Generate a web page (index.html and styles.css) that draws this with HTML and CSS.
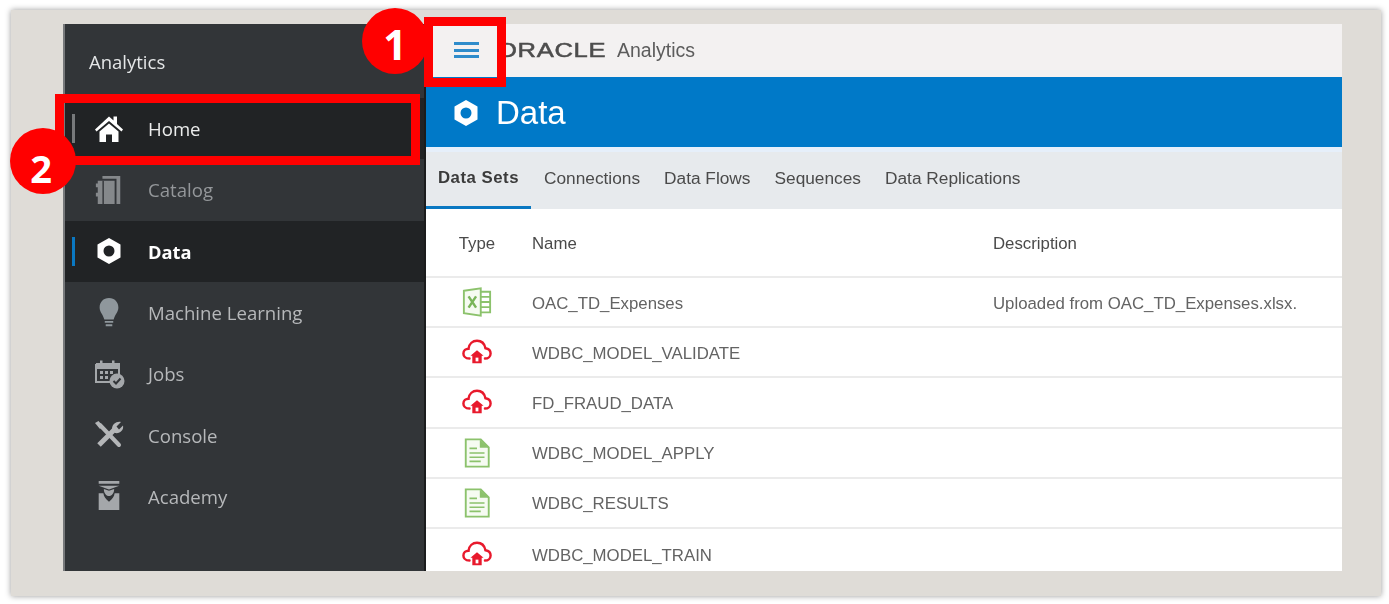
FILE: index.html
```html
<!DOCTYPE html>
<html lang="en">
<head>
  <meta charset="UTF-8">
  <title>Oracle Analytics - Data</title>
  <link rel="stylesheet" href="styles.css">
</head>
<body>
  <svg class="sprites" width="0" height="0">
    <defs>
      <symbol id="hex" viewBox="0 0 24 26">
        <path fill-rule="evenodd" d="M12 0 23.5 6.5V19.5L12 26 .5 19.5V6.5ZM12 7.5A5.5 5.5 0 1 0 12 18.500A5.500 5.500 0 1 0 12 7.500Z"/>
      </symbol>
      <symbol id="cloud" viewBox="0 0 32 28">
        <path fill="none" stroke="#e8192c" stroke-width="2.6" stroke-linecap="round" d="M8 21C3 21 1.500 17.500 1.500 15.500 1.500 12.500 4 10.500 7 10.500 7.500 5 11.500 2 16 2 20.500 2 24 5 25 10 28.500 10.500 30.500 13 30.500 15.500 30.500 18.500 28 21 24.500 21"/>
        <path fill="#e8192c" d="M16 12 23 18H21V26H11V18H9Z"/>
        <path fill="#fff" d="M14.500 20H17.500V24H14.500Z"/>
      </symbol>
      <symbol id="doc" viewBox="0 0 28 32">
        <path fill="#f6fbf2" stroke="#8cc26c" stroke-width="2" d="M2 1.500H18L26.500 10V30.500H2Z"/>
        <path fill="#8cc26c" d="M17 1.500 26.500 10.500H17Z"/>
        <path stroke="#8cc26c" stroke-width="1.800" d="M6 11H14M6 16H22M6 20.500H22M6 25H18"/>
      </symbol>
    </defs>
  </svg>

  <div class="frame">
    <div class="app">
      <aside class="sidebar">
        <div class="side-title">Analytics</div>
        <nav>
          <div class="nav-item nav-home">
            <span class="nav-mark"></span>
            <svg class="nav-icon" viewBox="0 0 32 30"><path fill="#fff" d="M16 2.500 20.500 6.500V2.500H24V10L30 15.500 28.500 17.500 16 7 3.500 17.500 2 15.500Z"/><path fill="#fff" d="M16 9.500 25.500 17.500V28H19V20.500H13V28H6.500V17.500Z"/></svg>
            <span class="nav-label">Home</span>
          </div>
          <div class="nav-item nav-dim">
            <span class="nav-mark"></span>
            <svg class="nav-icon" viewBox="0 0 32 32"><path fill="#85888b" d="M9 1H28V31H24V4H9Z"/><path fill="#85888b" d="M4 6H22V31H4V23H2V19H4V13H2V9H4Z"/><path fill="#323538" d="M9 6H10.500V31H9Z"/></svg>
            <span class="nav-label">Catalog</span>
          </div>
          <div class="nav-item nav-current">
            <span class="nav-mark"></span>
            <svg class="nav-icon nav-hex"><use href="#hex"/></svg>
            <span class="nav-label">Data</span>
          </div>
          <div class="nav-item">
            <span class="nav-mark"></span>
            <svg class="nav-icon" viewBox="0 0 32 32"><path fill="#8f979c" d="M16 0C22 0 26 4.500 26 10 26 15 22.500 17 21 23H11C9.500 17 6 15 6 10 6 4.500 10 0 16 0Z"/><path fill="#8f979c" d="M11.500 24.500H20.500V26.500H11.500ZM12.500 28H19.500V30H12.500Z"/></svg>
            <span class="nav-label">Machine Learning</span>
          </div>
          <div class="nav-item">
            <span class="nav-mark"></span>
            <svg class="nav-icon" viewBox="0 0 32 30"><path fill="none" stroke="#a4a7aa" stroke-width="2" d="M3 5H26V19M19 23H3V5"/><path fill="#a4a7aa" d="M3 5H26V10H3ZM7 1.500H9.500V6H7ZM19 1.500H21.500V6H19ZM7 12H10V15H7ZM12 12H15V15H12ZM17 12H20V15H17ZM7 17H10V20H7ZM12 17H15V20H12Z"/><circle cx="24" cy="22" r="7.500" fill="#a4a7aa"/><path fill="none" stroke="#323538" stroke-width="2" d="M20.500 22 23 24.500 27.500 19.500"/></svg>
            <span class="nav-label">Jobs</span>
          </div>
          <div class="nav-item">
            <span class="nav-mark"></span>
            <svg class="nav-icon" viewBox="0 0 32 30"><path stroke="#b4b6b8" stroke-width="4" stroke-linecap="round" d="M7 5 26 25"/><path stroke="#b4b6b8" stroke-width="5" d="M6 25 21 10"/><path fill="#b4b6b8" d="M19 9C19 4 23.500 1 28 2L23.500 6.500 26 9.500 30 5.500C31 10 27 14 22 13Z"/><path fill="#b4b6b8" d="M2 3 5.500 1 10 6 7 9Z"/></svg>
            <span class="nav-label">Console</span>
          </div>
          <div class="nav-item">
            <span class="nav-mark"></span>
            <svg class="nav-icon" viewBox="0 0 32 32"><path fill="#a4a7aa" d="M5 0H27V3H5ZM5 13H10C10.500 17 12.500 19 16 22 19.500 19 21.500 17 22 13H27V31H5Z"/><path fill="#a4a7aa" d="M5 5H27L16 9Z"/><path fill="#a4a7aa" d="M10.500 8.500 16 10.500 21.500 8.500C21.500 13 19 16 16 16 13 16 10.500 13 10.500 8.500Z"/></svg>
            <span class="nav-label">Academy</span>
          </div>
        </nav>
      </aside>

      <main class="main">
        <header class="topbar">
          <div class="menu-btn"><span></span><span></span><span></span></div>
          <div class="brand"><span class="brand-mark">ORACLE</span><span class="brand-name">Analytics</span></div>
        </header>
        <div class="page-head">
          <svg class="head-hex"><use href="#hex"/></svg>
          <h1>Data</h1>
        </div>
        <div class="tabs">
          <div class="tab active">Data Sets</div>
          <div class="tab">Connections</div>
          <div class="tab">Data Flows</div>
          <div class="tab">Sequences</div>
          <div class="tab">Data Replications</div>
        </div>
        <div class="table">
          <div class="row row-head">
            <div class="col-type">Type</div>
            <div class="col-name">Name</div>
            <div class="col-desc">Description</div>
          </div>
          <div class="row">
            <div class="col-type">
              <svg class="type-icon" viewBox="0 0 32 32"><path fill="#f6fbf2" stroke="#8cc26c" stroke-width="2" d="M2 4 20 1.500V30.500L2 28Z"/><path fill="none" stroke="#8cc26c" stroke-width="2" d="M20 5H30V27H20M20 10.500H30M20 16H30M20 21.500H30"/><path stroke="#7ab55a" stroke-width="2.600" d="M7 10 15 22M15 10 7 22"/></svg>
            </div>
            <div class="col-name">OAC_TD_Expenses</div>
            <div class="col-desc">Uploaded from OAC_TD_Expenses.xlsx.</div>
          </div>
          <div class="row">
            <div class="col-type"><svg class="type-icon"><use href="#cloud"/></svg></div>
            <div class="col-name">WDBC_MODEL_VALIDATE</div>
          </div>
          <div class="row">
            <div class="col-type"><svg class="type-icon"><use href="#cloud"/></svg></div>
            <div class="col-name">FD_FRAUD_DATA</div>
          </div>
          <div class="row">
            <div class="col-type"><svg class="type-icon"><use href="#doc"/></svg></div>
            <div class="col-name">WDBC_MODEL_APPLY</div>
          </div>
          <div class="row">
            <div class="col-type"><svg class="type-icon"><use href="#doc"/></svg></div>
            <div class="col-name">WDBC_RESULTS</div>
          </div>
          <div class="row row-last">
            <div class="col-type"><svg class="type-icon"><use href="#cloud"/></svg></div>
            <div class="col-name">WDBC_MODEL_TRAIN</div>
          </div>
        </div>
      </main>
    </div>

    <div class="callout-box box-menu"></div>
    <div class="callout-box box-home"></div>
    <div class="badge badge-one">1</div>
    <div class="badge badge-two">2</div>
  </div>
</body>
</html>
```

FILE: styles.css
```css
html, body {
  margin: 0;
  height: 604px;
  overflow: hidden;
  background: #fff;
}

.sprites {
  position: absolute;
}

.frame {
  position: relative;
  box-sizing: border-box;
  width: 1370px;
  height: 586px;
  margin: 10px 0 0 11px;
  padding: 14px 39px 25px 52px;
  background: #dfdcd7;
  box-shadow: 0 0 6px rgba(0, 0, 0, 0.4);
}

.app {
  display: flex;
  height: 547px;
  overflow: hidden;
  filter: blur(0.6px);
}

/* left menu */
.sidebar {
  box-sizing: border-box;
  width: 363px;
  flex-shrink: 0;
  background: #323538;
  border-left: 2px solid #77797b;
  border-right: 2px solid #1b1c1d;
  font-family: "Open Sans", sans-serif;
}

.side-title {
  height: 74px;
  padding: 25px 0 0 24px;
  box-sizing: border-box;
  font-size: 18.500px;
  line-height: 26px;
  color: #e4e6e7;
}

.nav-item {
  display: flex;
  align-items: center;
  height: 61.300px;
  padding-left: 7px;
  font-size: 18.600px;
  color: #b6b8ba;
}

.nav-mark {
  width: 3px;
  height: 29px;
}

.nav-icon {
  width: 32px;
  height: 30px;
  margin-left: 18px;
  fill: #fff;
}

.nav-label {
  margin-left: 23px;
}

.nav-home {
  background: #212325;
  color: #eceded;
}

.nav-home .nav-mark {
  background: #77797b;
}

.nav-dim {
  color: #94979a;
}

.nav-current {
  background: #212325;
  color: #fff;
  font-weight: 700;
  font-size: 18.300px;
}

.nav-current .nav-mark {
  background: #0a78c2;
}

.nav-hex {
  height: 26px;
}

/* main column */
.main {
  flex: 1;
  display: flex;
  flex-direction: column;
  min-width: 0;
  background: #fff;
  font-family: "Liberation Sans", Arial, sans-serif;
}

.topbar {
  display: flex;
  align-items: center;
  box-sizing: border-box;
  height: 53px;
  padding-bottom: 1px;
  flex-shrink: 0;
  background: #f3f1f1;
}

.menu-btn {
  display: flex;
  flex-direction: column;
  gap: 3.500px;
  width: 25px;
  margin-left: 28px;
}

.menu-btn span {
  height: 3px;
  background: #2f8ccb;
}

.brand {
  display: flex;
  align-items: baseline;
  margin-left: 18px;
  color: #4d4d4d;
}

.brand-mark {
  display: inline-block;
  width: 120px;
  font-size: 20px;
  -webkit-text-stroke: 0.500px #4d4d4d;
  letter-spacing: 0.500px;
  transform: scaleX(1.280);
  transform-origin: left;
}

.brand-name {
  font-size: 19.500px;
  color: #5c5c5c;
}

.page-head {
  display: flex;
  align-items: center;
  box-sizing: border-box;
  height: 70px;
  padding-top: 2px;
  flex-shrink: 0;
  background: #0079c8;
  color: #fff;
}

.head-hex {
  width: 24px;
  height: 26px;
  margin-left: 28px;
  fill: #fff;
}

.page-head h1 {
  margin: 0 0 0 18px;
  font-size: 33px;
  font-weight: 400;
}

.tabs {
  display: flex;
  align-items: stretch;
  height: 62px;
  flex-shrink: 0;
  box-sizing: border-box;
  background: #e7eaed;
  border-top: 5px solid #e6effa;
}

.tab {
  display: flex;
  align-items: center;
  padding: 0 12px;
  margin-top: -5px;
  font-size: 17.300px;
  color: #4a4a4a;
}

.tab.active {
  font-weight: 700;
  font-size: 16.800px;
  letter-spacing: 0.500px;
  border-bottom: 3px solid #0a78c2;
  padding-top: 3px;
  color: #3b3b3b;
}

.tab:nth-child(2) {
  margin-left: 1px;
}

.table {
  flex: 1;
  font-size: 16.800px;
  color: #636363;
}

.row {
  display: flex;
  align-items: center;
  box-sizing: border-box;
  height: 50.200px;
  border-bottom: 2px solid #ebebeb;
}

.row-head {
  height: 69px;
  color: #4a4a4a;
}

.row-last {
  border-bottom: none;
}

.col-type {
  display: flex;
  justify-content: center;
  width: 102px;
  margin-right: 4px;
  flex-shrink: 0;
}

.col-name {
  width: 461px;
  flex-shrink: 0;
}

.col-name,
.col-desc,
.row-head .col-type {
  padding-top: 3px;
}

.type-icon {
  width: 30px;
  height: 30px;
}

/* red callouts lying over the screenshot */
.callout-box {
  position: absolute;
  box-sizing: border-box;
  border: 9px solid #ff0000;
}

.box-menu {
  left: 413px;
  top: 7px;
  width: 82px;
  height: 70px;
}

.box-home {
  left: 44px;
  top: 84px;
  width: 365px;
  height: 71px;
}

.badge {
  position: absolute;
  box-sizing: border-box;
  display: flex;
  align-items: center;
  justify-content: center;
  width: 66px;
  height: 66px;
  border-radius: 50%;
  background: #ff0000;
  color: #fff;
  font-family: "Open Sans", sans-serif;
  font-weight: 700;
}

.badge-one {
  left: 351px;
  top: -2px;
  padding-top: 6px;
  font-size: 41px;
}

.badge-two {
  left: -1px;
  top: 118px;
  padding: 14px 4px 0 0;
  font-size: 38px;
}
```
